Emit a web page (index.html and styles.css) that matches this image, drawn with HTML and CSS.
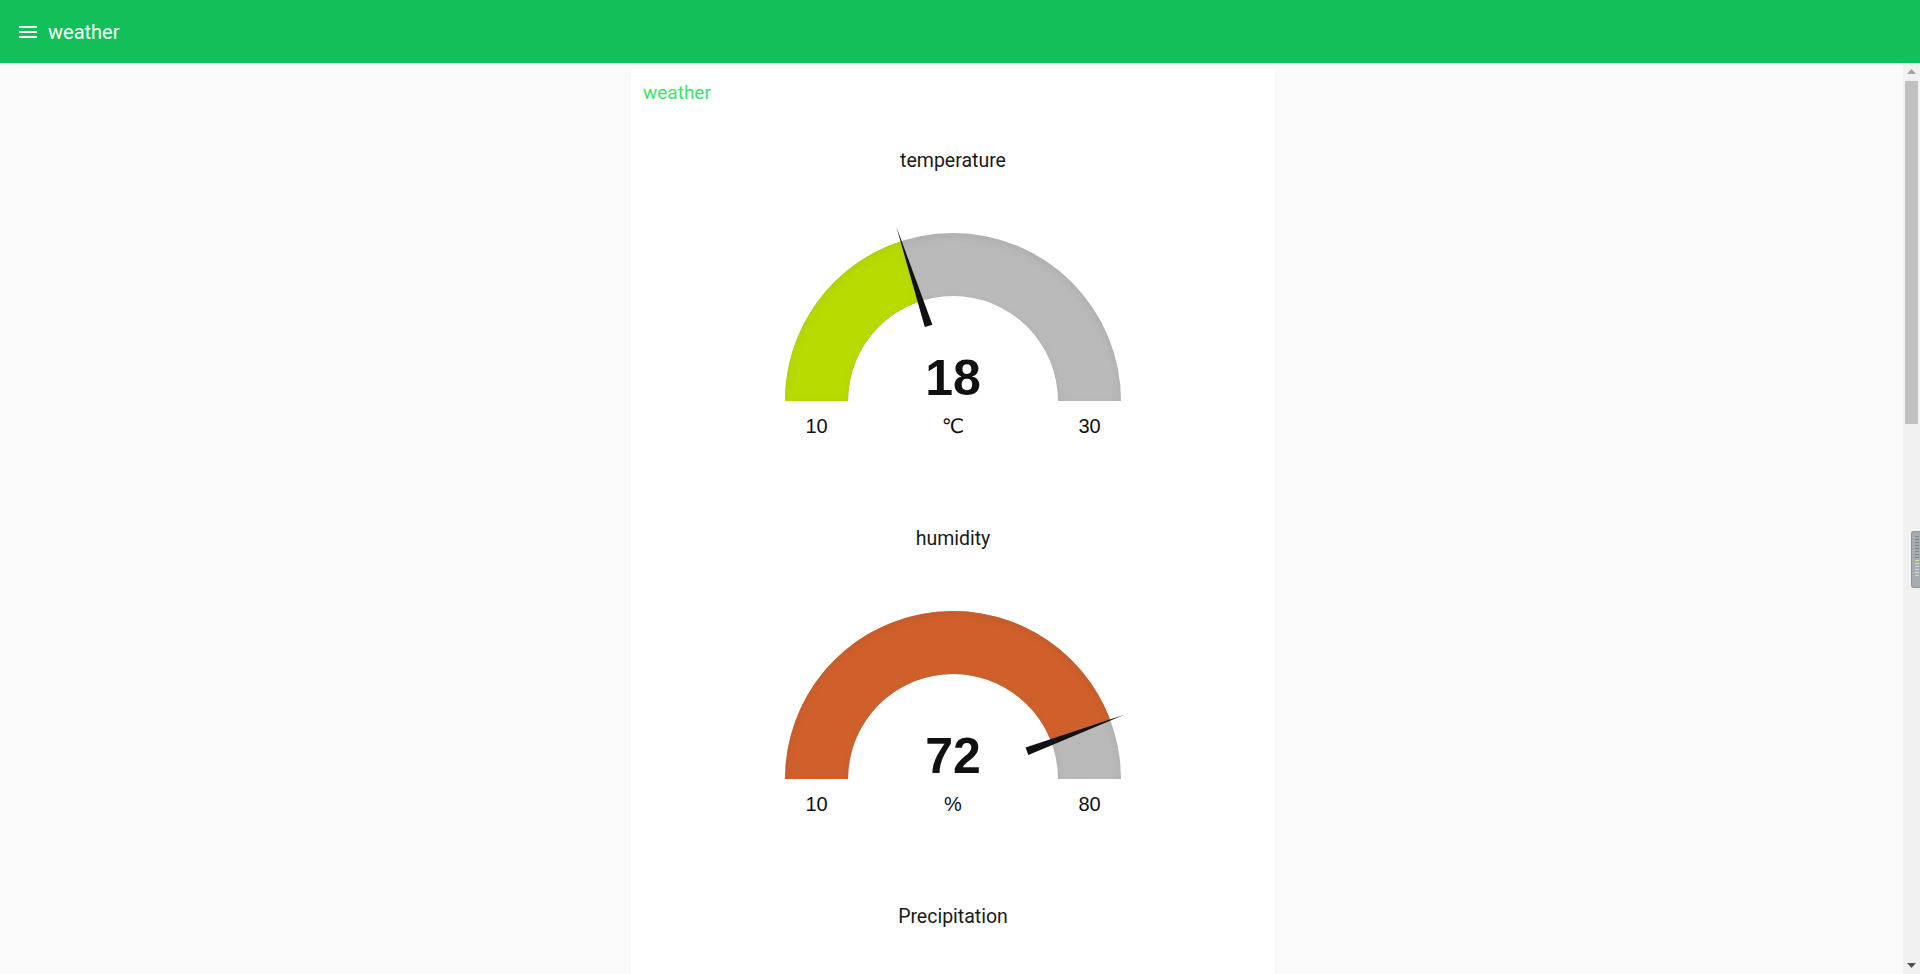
FILE: index.html
```html
<!DOCTYPE html>
<html lang="en">
<head>
<meta charset="utf-8">
<title>weather</title>
<link rel="stylesheet" href="styles.css">
</head>
<body>
<header class="topbar">
  <svg class="menu-icon" width="18" height="14" viewBox="0 0 18 14" aria-hidden="true">
    <rect x="0" y="0" width="18" height="2" fill="#ffffff"/>
    <rect x="0" y="5" width="18" height="2" fill="#ffffff"/>
    <rect x="0" y="10" width="18" height="2" fill="#ffffff"/>
  </svg>
  <span class="topbar-title">weather</span>
</header>
<div class="main">
  <main class="content">
    <section class="card">
      <div class="card-title">weather</div>

      <div class="gauge-block">
        <div class="gauge-title">temperature</div>
        <svg class="gauge" width="644" height="334" viewBox="0 0 644 334">
          <defs>
            <filter id="inner" x="-5%" y="-5%" width="110%" height="110%">
              <feOffset in="SourceAlpha" dx="0" dy="3" result="off"/>
              <feGaussianBlur in="off" stdDeviation="5" result="blur"/>
              <feComposite in="SourceAlpha" in2="blur" operator="out" result="inv"/>
              <feFlood flood-color="#000000" flood-opacity="0.14"/>
              <feComposite in2="inv" operator="in" result="shadow"/>
              <feComposite in="shadow" in2="SourceGraphic" operator="over"/>
            </filter>
          </defs>
          <path class="g-bg" filter="url(#inner)" d="M154 229 A168 168 0 0 1 490 229 L427 229 A105 105 0 0 0 217 229 Z"/>
          <path class="g-temp" filter="url(#inner)" d="M154 229 A168 168 0 0 1 270.085 69.222 L289.553 129.139 A105 105 0 0 0 217 229 Z"/>
          <polygon class="needle" points="301.391,152.630 293.783,155.102 265.449,54.956"/>
          <text class="g-value" x="322" y="223">18</text>
          <text class="g-label" x="185.5" y="261">10</text>
          <text class="g-label" x="322" y="261">℃</text>
          <text class="g-label" x="458.5" y="261">30</text>
        </svg>
      </div>

      <div class="gauge-block">
        <div class="gauge-title">humidity</div>
        <svg class="gauge" width="644" height="334" viewBox="0 0 644 334">
          <path class="g-bg" filter="url(#inner)" d="M154 229 A168 168 0 0 1 490 229 L427 229 A105 105 0 0 0 217 229 Z"/>
          <path class="g-hum" filter="url(#inner)" d="M154 229 A168 168 0 0 1 479.287 169.970 L420.304 192.106 A105 105 0 0 0 217 229 Z"/>
          <polygon class="needle" points="397.367,204.987 394.557,197.497 493.330,164.699"/>
          <text class="g-value" x="322" y="223">72</text>
          <text class="g-label" x="185.5" y="261">10</text>
          <text class="g-label" x="322" y="261">%</text>
          <text class="g-label" x="458.5" y="261">80</text>
        </svg>
      </div>

      <div class="gauge-block">
        <div class="gauge-title">Precipitation</div>
        <svg class="gauge" width="644" height="334" viewBox="0 0 644 334">
          <path class="g-bg" filter="url(#inner)" d="M154 229 A168 168 0 0 1 490 229 L427 229 A105 105 0 0 0 217 229 Z"/>
        </svg>
      </div>
    </section>
  </main>
  <aside class="scrollbar" aria-hidden="true">
    <div class="sb-btn">
      <svg width="9" height="5" viewBox="0 0 9 5"><polygon points="0,5 9,5 4.5,0" fill="#a3a3a3"/></svg>
    </div>
    <div class="sb-track">
      <div class="sb-thumb"></div>
    </div>
    <div class="sb-btn">
      <svg width="9" height="5" viewBox="0 0 9 5"><polygon points="0,0 9,0 4.5,5" fill="#505050"/></svg>
    </div>
  </aside>
  <div class="side-tab" aria-hidden="true">
    <span class="tab-line"></span><span class="tab-line"></span><span class="tab-line"></span><span class="tab-line"></span>
    <span class="tab-line"></span><span class="tab-line"></span><span class="tab-line"></span><span class="tab-line"></span>
    <span class="tab-line hl"></span><span class="tab-line hl"></span><span class="tab-line hl2"></span><span class="tab-line hl2"></span>
    <span class="tab-line hl2"></span><span class="tab-line hl2"></span>
  </div>
</div>
</body>
</html>
```
FILE: styles.css
```css
html, body {
  margin: 0;
  padding: 0;
  height: 100%;
  overflow: hidden;
}

body {
  font-family: Roboto, "Noto Sans", "Liberation Sans", sans-serif;
  background: #fafafa;
  display: flex;
  flex-direction: column;
}

.topbar {
  flex: 0 0 63px;
  height: 63px;
  background: #13bf58;
  display: flex;
  align-items: center;
  padding-left: 19px;
  gap: 11px;
  box-sizing: border-box;
}

.menu-icon {
  display: block;
  margin-top: 2px;
}

.topbar-title {
  color: #ffffff;
  font-size: 20px;
  line-height: 24px;
  margin-top: 1px;
}

.main {
  flex: 1 1 auto;
  display: flex;
  min-height: 0;
  position: relative;
}

.content {
  flex: 1 1 auto;
  overflow: hidden;
  background: #fafafa;
  padding: 7px 0 0 3px;
  display: flex;
  justify-content: center;
  align-items: flex-start;
}

.scrollbar {
  flex: 0 0 17px;
  width: 17px;
  background: #f1f1f1;
  display: flex;
  flex-direction: column;
}

.sb-btn {
  height: 17px;
  display: flex;
  align-items: center;
  justify-content: center;
}

.sb-track {
  flex: 1 1 auto;
  padding: 1px 2px 0 2px;
}

.sb-thumb {
  height: 343px;
  background: #c1c1c1;
}

.side-tab {
  position: absolute;
  right: 0;
  top: 468px;
  width: 9px;
  height: 57px;
  box-sizing: border-box;
  background: #a8acb2;
  border: 1px solid #8e9299;
  border-right: none;
  border-radius: 3px 0 0 3px;
  display: flex;
  flex-direction: column;
  align-items: flex-end;
  padding: 4px 1px 0 0;
  gap: 2px;
}

.tab-line {
  display: block;
  width: 4px;
  height: 1px;
  background: #7d8188;
}

.tab-line.hl { background: #d8e6a6; }
.tab-line.hl2 { background: #bfe3d6; }

.card {
  width: 644px;
  min-height: 2322px;
  background: #ffffff;
  flex: 0 0 auto;
}

.card-title {
  color: #3be26f;
  font-size: 19px;
  line-height: 24px;
  padding: 11px 0 0 12px;
  height: 47px;
}

.gauge-block {
  height: 378px;
  display: flex;
  flex-direction: column;
  align-items: center;
}

.gauge-title {
  font-size: 19.5px;
  line-height: 24px;
  height: 24px;
  color: #1a1a1a;
  padding-top: 21px;
  margin-bottom: -1px;
}

.gauge {
  display: block;
}

.g-bg { fill: #b9b9b9; }
.g-temp { fill: #b8dc00; }
.g-hum { fill: #d0602b; }
.needle { fill: #111111; }

.g-value {
  font-family: "Liberation Sans", Arial, sans-serif;
  font-weight: bold;
  font-size: 50px;
  fill: #111111;
  text-anchor: middle;
}

.g-label {
  font-family: "Liberation Sans", "DejaVu Sans", Arial, sans-serif;
  font-size: 20px;
  fill: #111111;
  text-anchor: middle;
}
```
